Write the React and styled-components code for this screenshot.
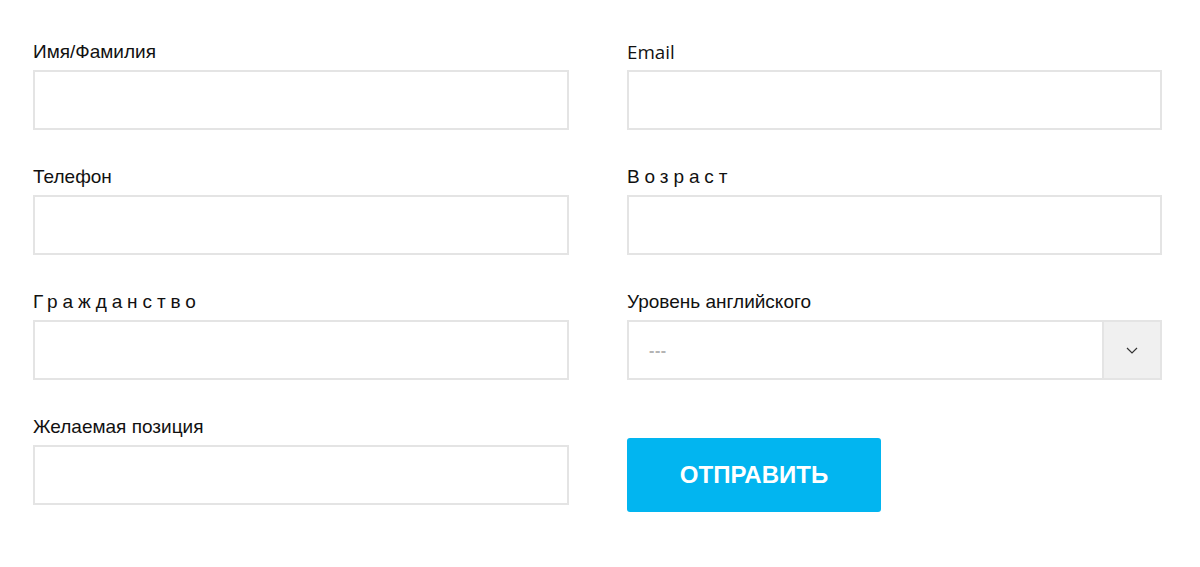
import React from "react";
import styled, { createGlobalStyle } from "styled-components";

const Global = createGlobalStyle`
  html, body { margin: 0; padding: 0; background: #fff; }
  body { font-family: "Liberation Sans", Arial, sans-serif; }
  * { box-sizing: border-box; }
`;

const Form = styled.form`
  display: grid;
  grid-template-columns: 536px 535px;
  column-gap: 58px;
  row-gap: 36px;
  padding: 41px 0 0 33px;
`;

const Field = styled.div`
  display: flex;
  flex-direction: column;
`;

const Label = styled.label`
  display: block;
  height: 22px;
  line-height: 22px;
  margin-bottom: 7px;
  font-family: ${(p) => (p.$alt ? '"Open Sans", sans-serif' : '"Liberation Sans", Arial, sans-serif')};
  font-size: ${(p) => (p.$alt ? "18.8px" : "19px")};
  color: #111;
  letter-spacing: ${(p) => (p.$spaced ? "4.9px" : "0")};
  white-space: nowrap;
`;

const Input = styled.input`
  display: block;
  width: 100%;
  height: 60px;
  border: 2px solid #e4e4e4;
  background: #fff;
  outline: none;
  padding: 0 20px;
  font-size: 16px;
  font-family: "Liberation Sans", Arial, sans-serif;
`;

const SelectBox = styled.div`
  display: flex;
  height: 60px;
  border: 2px solid #e4e4e4;
  background: #fff;
`;

const SelectValue = styled.div`
  flex: 1;
  display: flex;
  align-items: center;
  padding-left: 20px;
  padding-top: 2px;
  font-size: 16px;
  font-weight: 700;
  color: #b4b4b4;
  letter-spacing: 0.6px;
`;

const Arrow = styled.div`
  width: 58px;
  display: flex;
  align-items: center;
  justify-content: center;
  background: #f0f0f0;
  border-left: 2px solid #e4e4e4;
`;

const Button = styled.button`
  margin-top: 22px;
  width: 254px;
  height: 74px;
  border: none;
  border-radius: 3px;
  background: #02b5f0;
  color: #fff;
  font-family: "Liberation Sans", Arial, sans-serif;
  font-weight: 700;
  font-size: 24px;
  padding: 0;
  cursor: pointer;
`;

export default function App() {
  return (
    <>
      <Global />
      <Form onSubmit={(e) => e.preventDefault()}>
        <Field>
          <Label>Имя/Фамилия</Label>
          <Input type="text" />
        </Field>
        <Field>
          <Label $alt>Email</Label>
          <Input type="email" />
        </Field>
        <Field>
          <Label>Телефон</Label>
          <Input type="tel" />
        </Field>
        <Field>
          <Label $spaced>Возраст</Label>
          <Input type="text" />
        </Field>
        <Field>
          <Label $spaced>Гражданство</Label>
          <Input type="text" />
        </Field>
        <Field>
          <Label>Уровень английского</Label>
          <SelectBox>
            <SelectValue>---</SelectValue>
            <Arrow>
              <svg width="12" height="7" viewBox="0 0 12 7" fill="none">
                <path d="M1 1l5 5 5-5" stroke="#333" strokeWidth="1.2" />
              </svg>
            </Arrow>
          </SelectBox>
        </Field>
        <Field>
          <Label>Желаемая позиция</Label>
          <Input type="text" />
        </Field>
        <Field>
          <Button type="submit">ОТПРАВИТЬ</Button>
        </Field>
      </Form>
    </>
  );
}
